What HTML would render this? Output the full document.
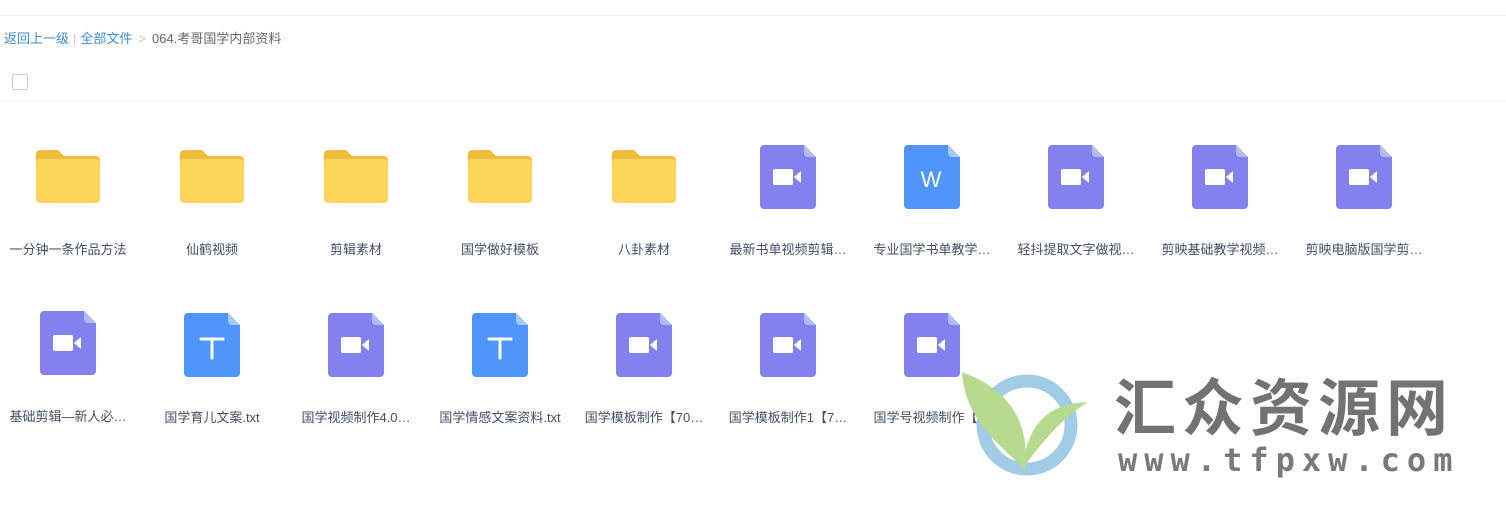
<!DOCTYPE html>
<html><head><meta charset="utf-8"><style>
*{margin:0;padding:0;box-sizing:border-box}
body{width:1506px;height:525px;background:#fff;position:relative;overflow:hidden;font-family:"Liberation Sans","Microsoft YaHei","Noto Sans CJK SC",sans-serif}
.line{position:absolute;left:0;right:0;height:1px;background:#eef0f4}
.bc{position:absolute;left:4px;top:28px;font-size:13px;color:#666;white-space:nowrap}
.bc a{color:#3b8cd4;text-decoration:none}
.bc .s{color:#c8c8c8;margin:0 3px}
.cb{position:absolute;left:12px;top:74px;width:16px;height:16px;border:1px solid #c6ccd6;border-radius:2px}
.it{position:absolute;width:144px;text-align:center}
.it svg{display:block;margin:0 auto}
.lb{position:absolute;left:-10px;width:144px;font-size:13px;color:#424e67;white-space:nowrap;text-align:center}
</style></head><body>
<div class="line" style="top:15px"></div>
<div class="bc"><a>返回上一级</a><span class="s" style="margin:0 4px">|</span><a>全部文件</a><span class="s" style="margin:0 6px">&gt;</span>064.考哥国学内部资料</div>
<div class="cb"></div>
<div class="line" style="top:100px"></div>

<svg width="0" height="0" style="position:absolute">
<defs>
<g id="fold"><path d="M0 4a4 4 0 0 1 4-4h18l6 6h32a4 4 0 0 1 4 4v6H0z" fill="#efbd3e"/><rect x="0" y="9" width="64" height="44" rx="4" fill="#fdd55a"/></g>
<g id="vid"><path d="M4 0h40l12 12v48a4 4 0 0 1-4 4H4a4 4 0 0 1-4-4V4a4 4 0 0 1 4-4z" fill="#8381ee"/><path d="M44 0l12 12H48a4 4 0 0 1-4-4z" fill="#b9b8f7"/><rect x="13" y="24" width="20" height="16" rx="2" fill="#fff"/><path d="M34 32l7-6v12z" fill="#fff"/></g>
<g id="txt"><path d="M4 0h40l12 12v48a4 4 0 0 1-4 4H4a4 4 0 0 1-4-4V4a4 4 0 0 1 4-4z" fill="#4f95fb"/><path d="M44 0l12 12H48a4 4 0 0 1-4-4z" fill="#a9cbfc"/><path d="M17 26h22M28 26v19" stroke="#fff" stroke-width="3" stroke-linecap="round"/></g>
<g id="doc"><path d="M4 0h40l12 12v48a4 4 0 0 1-4 4H4a4 4 0 0 1-4-4V4a4 4 0 0 1 4-4z" fill="#4f95fb"/><path d="M44 0l12 12H48a4 4 0 0 1-4-4z" fill="#a9cbfc"/><text x="27" y="42" font-size="22" fill="#fff" text-anchor="middle" font-family="Liberation Sans,sans-serif">W</text></g>
</defs></svg>

<!-- row 1 -->
<div class="it" style="left:-4px;top:150px"><svg width="64" height="53"><use href="#fold"/></svg></div>
<div class="it" style="left:140px;top:150px"><svg width="64" height="53"><use href="#fold"/></svg></div>
<div class="it" style="left:284px;top:150px"><svg width="64" height="53"><use href="#fold"/></svg></div>
<div class="it" style="left:428px;top:150px"><svg width="64" height="53"><use href="#fold"/></svg></div>
<div class="it" style="left:572px;top:150px"><svg width="64" height="53"><use href="#fold"/></svg></div>
<div class="it" style="left:716px;top:145px"><svg width="56" height="64"><use href="#vid"/></svg></div>
<div class="it" style="left:860px;top:145px"><svg width="56" height="64"><use href="#doc"/></svg></div>
<div class="it" style="left:1004px;top:145px"><svg width="56" height="64"><use href="#vid"/></svg></div>
<div class="it" style="left:1148px;top:145px"><svg width="56" height="64"><use href="#vid"/></svg></div>
<div class="it" style="left:1292px;top:145px"><svg width="56" height="64"><use href="#vid"/></svg></div>

<div class="lb" style="left:-4px;top:239px">一分钟一条作品方法</div>
<div class="lb" style="left:140px;top:239px">仙鹤视频</div>
<div class="lb" style="left:284px;top:239px">剪辑素材</div>
<div class="lb" style="left:428px;top:239px">国学做好模板</div>
<div class="lb" style="left:572px;top:239px">八卦素材</div>
<div class="lb" style="left:716px;top:239px">最新书单视频剪辑…</div>
<div class="lb" style="left:860px;top:239px">专业国学书单教学…</div>
<div class="lb" style="left:1004px;top:239px">轻抖提取文字做视…</div>
<div class="lb" style="left:1148px;top:239px">剪映基础教学视频…</div>
<div class="lb" style="left:1292px;top:239px">剪映电脑版国学剪…</div>

<!-- row 2 -->
<div class="it" style="left:-4px;top:311px"><svg width="56" height="64"><use href="#vid"/></svg></div>
<div class="it" style="left:140px;top:313px"><svg width="56" height="64"><use href="#txt"/></svg></div>
<div class="it" style="left:284px;top:313px"><svg width="56" height="64"><use href="#vid"/></svg></div>
<div class="it" style="left:428px;top:313px"><svg width="56" height="64"><use href="#txt"/></svg></div>
<div class="it" style="left:572px;top:313px"><svg width="56" height="64"><use href="#vid"/></svg></div>
<div class="it" style="left:716px;top:313px"><svg width="56" height="64"><use href="#vid"/></svg></div>
<div class="it" style="left:860px;top:313px"><svg width="56" height="64"><use href="#vid"/></svg></div>

<div class="lb" style="left:-4px;top:406px">基础剪辑—新人必…</div>
<div class="lb" style="left:140px;top:407px">国学育儿文案.txt</div>
<div class="lb" style="left:284px;top:407px">国学视频制作4.0…</div>
<div class="lb" style="left:428px;top:407px">国学情感文案资料.txt</div>
<div class="lb" style="left:572px;top:407px">国学模板制作【70…</div>
<div class="lb" style="left:716px;top:407px">国学模板制作1【7…</div>
<div class="lb" style="left:860px;top:407px">国学号视频制作【…</div>

<!-- watermark -->
<svg style="position:absolute;left:955px;top:368px" width="140" height="115">
<circle cx="72" cy="57" r="44" fill="none" stroke="#98c6e2" stroke-width="13" opacity="0.9"/>
<path d="M7 4C50 20 76 50 70 102C50 80 10 55 7 4z" fill="#b7db8e"/>
<path d="M68 100C72 55 95 35 133 34C110 48 90 70 68 100z" fill="#b7db8e"/>
</svg>
<div style="position:absolute;left:1114px;top:366px;font-size:62px;font-weight:bold;color:#727272;letter-spacing:6px;line-height:74px;font-family:'Noto Sans CJK SC',sans-serif;white-space:nowrap">汇众资源网</div>
<div style="position:absolute;left:1118px;top:440px;font-size:32px;font-weight:bold;color:#7a7a7a;letter-spacing:7px;font-family:'DejaVu Sans Mono','Liberation Mono',monospace;white-space:nowrap;line-height:40px">www.tfpxw.com</div>
</body></html>
